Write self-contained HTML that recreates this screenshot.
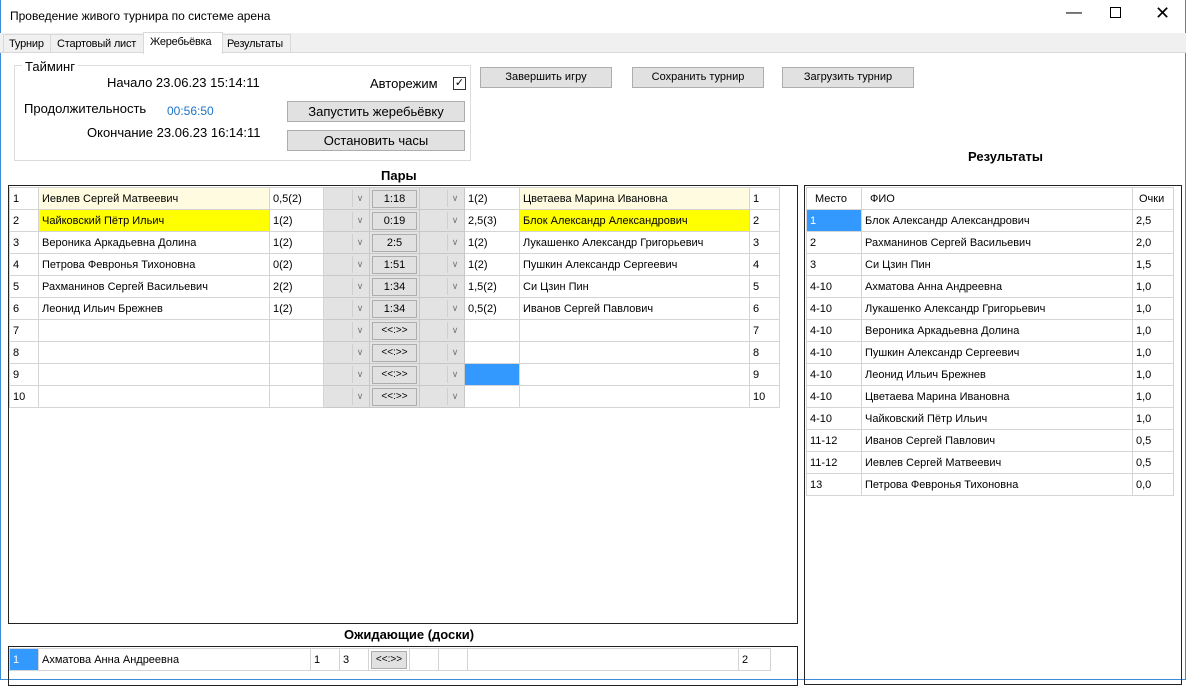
<!DOCTYPE html>
<html><head><meta charset="utf-8"><style>
*{box-sizing:border-box}
body{margin:0;width:1186px;height:680px;overflow:hidden;background:#fff;font-family:"Liberation Sans",sans-serif;font-size:11px;color:#000;position:relative}
.a{position:absolute;white-space:nowrap}
.btn{position:absolute;background:#e1e1e1;border:1px solid #adadad;text-align:center;font-size:11px}
table{border-collapse:collapse;table-layout:fixed;position:absolute}
td{border:1px solid #d4d4d4;height:22px;padding:0 3px;white-space:nowrap;overflow:hidden;font-size:11px}
td.g{background:#e3e3e3;border-color:#c8c8c8;padding:0;position:relative}
.cb{position:absolute;right:2px;top:2px;width:15px;height:17px;border-left:1px solid #cfcfcf;color:#777;font-size:9px;text-align:center;line-height:17px}
.bt{margin:1px 2px;height:18px;border:1px solid #adadad;background:#e1e1e1;text-align:center;line-height:16px}
.sel{background:#3399ff;color:#fff}
.y1{background:#fffbe0}
.y2{background:#ffff00}
.tab{font-size:11px;letter-spacing:-0.2px}
</style></head><body>
<div class="a" style="left:0;top:0;width:1186px;height:680px;border:1px solid #3c8bd6;border-top:none"></div>
<div class="a" style="left:10px;top:9px;font-size:12px">Проведение живого турнира по системе арена</div>
<div class="a" style="left:1066px;top:4px;font-size:16px">&#8212;</div>
<div class="a" style="left:1110px;top:7px;width:11px;height:11px;border:1px solid #000"></div>
<div class="a" style="left:1155px;top:3px;font-size:18px">&#10005;</div>
<div class="a" style="left:0;top:33px;width:1186px;height:20px;background:#f0f0f0;border-bottom:1px solid #d9d9d9"></div>
<div class="a tab" style="left:3px;top:34px;width:48px;height:19px;border:1px solid #d9d9d9;background:#f0f0f0;padding:3px 5px">Турнир</div>
<div class="a tab" style="left:50px;top:34px;width:94px;height:19px;border:1px solid #d9d9d9;background:#f0f0f0;padding:3px 6px">Стартовый лист</div>
<div class="a tab" style="left:143px;top:32px;width:80px;height:22px;border:1px solid #d9d9d9;border-bottom:none;background:#fff;padding:3px 6px">Жеребьёвка</div>
<div class="a tab" style="left:222px;top:34px;width:69px;height:19px;border:1px solid #d9d9d9;background:#f0f0f0;padding:3px 4px">Результаты</div>
<div class="a" style="left:14px;top:65px;width:457px;height:96px;border:1px solid #dcdcdc"></div>
<div class="a" style="left:22px;top:59px;background:#fff;padding:0 3px;font-size:13px">Тайминг</div>
<div class="a" style="left:107px;top:75px;font-size:13px">Начало 23.06.23 15:14:11</div>
<div class="a" style="left:24px;top:101px;font-size:13px">Продолжительность</div>
<div class="a" style="left:167px;top:104px;font-size:12px;color:#1e73c8">00:56:50</div>
<div class="a" style="left:87px;top:125px;font-size:13px">Окончание 23.06.23 16:14:11</div>
<div class="a" style="left:370px;top:76px;font-size:13px">Авторежим</div>
<div class="a" style="left:453px;top:77px;width:13px;height:13px;border:1px solid #333;font-size:11px;line-height:11px;text-align:center">&#10003;</div>
<div class="btn" style="left:287px;top:101px;width:178px;height:21px;font-size:13px;line-height:19px">Запустить жеребьёвку</div>
<div class="btn" style="left:287px;top:130px;width:178px;height:21px;font-size:13px;line-height:19px">Остановить часы</div>
<div class="btn" style="left:480px;top:67px;width:132px;height:21px;line-height:19px">Завершить игру</div>
<div class="btn" style="left:632px;top:67px;width:132px;height:21px;line-height:19px">Сохранить турнир</div>
<div class="btn" style="left:782px;top:67px;width:132px;height:21px;line-height:19px">Загрузить турнир</div>
<div class="a" style="left:381px;top:168px;font-size:13px;font-weight:bold">Пары</div>
<div class="a" style="left:968px;top:149px;font-size:13px;font-weight:bold">Результаты</div>
<div class="a" style="left:8px;top:185px;width:790px;height:439px;border:1px solid #222"></div>
<table id="p" style="left:9px;top:187px;width:770px"><colgroup><col style="width:29px"><col style="width:231px"><col style="width:54px"><col style="width:46px"><col style="width:50px"><col style="width:45px"><col style="width:55px"><col style="width:230px"><col style="width:30px"></colgroup></table>
<div class="a" style="left:804px;top:185px;width:378px;height:500px;border:1px solid #222"></div>
<table id="r" style="left:806px;top:187px;width:367px"><colgroup><col style="width:55px"><col style="width:271px"><col style="width:41px"></colgroup></table>
<div class="a" style="left:344px;top:627px;font-size:13px;font-weight:bold">Ожидающие (доски)</div>
<div class="a" style="left:8px;top:646px;width:790px;height:40px;border:1px solid #222"></div>
<table style="left:9px;top:648px;width:761px"><colgroup><col style="width:29px"><col style="width:272px"><col style="width:29px"><col style="width:29px"><col style="width:41px"><col style="width:29px"><col style="width:29px"><col style="width:271px"><col style="width:32px"></colgroup>
<tr><td class="sel">1</td><td>Ахматова Анна Андреевна</td><td>1</td><td>3</td><td style="padding:0"><div class="bt" style="font-size:10px">&lt;&lt;:&gt;&gt;</div></td><td></td><td></td><td></td><td>2</td></tr></table>
<script>
var P=[["Иевлев Сергей Матвеевич","0,5(2)","1:18","1(2)","Цветаева Марина Ивановна","y1"],
["Чайковский Пётр Ильич","1(2)","0:19","2,5(3)","Блок Александр Александрович","y2"],
["Вероника Аркадьевна Долина","1(2)","2:5","1(2)","Лукашенко Александр Григорьевич",""],
["Петрова Февронья Тихоновна","0(2)","1:51","1(2)","Пушкин Александр Сергеевич",""],
["Рахманинов Сергей Васильевич","2(2)","1:34","1,5(2)","Си Цзин Пин",""],
["Леонид Ильич Брежнев","1(2)","1:34","0,5(2)","Иванов Сергей Павлович",""]];
var h="";
for(var i=0;i<10;i++){var d=P[i]||["","","&lt;&lt;:&gt;&gt;","","",""];var c=d[5];
h+="<tr><td>"+(i+1)+"</td><td class='"+c+"'>"+d[0]+"</td><td>"+d[1]+"</td><td class='g'><div class='cb'>&#8744;</div></td><td class='g'><div class='bt'"+(P[i]?"":" style='font-size:10px'")+">"+d[2]+"</div></td><td class='g'><div class='cb'>&#8744;</div></td><td"+(i==8?" class='sel'":"")+">"+d[3]+"</td><td class='"+c+"'>"+d[4]+"</td><td>"+(i+1)+"</td></tr>";}
document.getElementById("p").innerHTML+=h;
var R=[["1","Блок Александр Александрович","2,5"],["2","Рахманинов Сергей Васильевич","2,0"],["3","Си Цзин Пин","1,5"],["4-10","Ахматова Анна Андреевна","1,0"],["4-10","Лукашенко Александр Григорьевич","1,0"],["4-10","Вероника Аркадьевна Долина","1,0"],["4-10","Пушкин Александр Сергеевич","1,0"],["4-10","Леонид Ильич Брежнев","1,0"],["4-10","Цветаева Марина Ивановна","1,0"],["4-10","Чайковский Пётр Ильич","1,0"],["11-12","Иванов Сергей Павлович","0,5"],["11-12","Иевлев Сергей Матвеевич","0,5"],["13","Петрова Февронья Тихоновна","0,0"]];
h="<tr><td style='padding-left:8px'>Место</td><td style='padding-left:8px'>ФИО</td><td style='padding-left:6px'>Очки</td></tr>";
R.forEach(function(r,i){h+="<tr><td"+(i==0?" class='sel'":"")+">"+r[0]+"</td><td>"+r[1]+"</td><td>"+r[2]+"</td></tr>";});
document.getElementById("r").innerHTML+=h;
</script>
</body></html>
